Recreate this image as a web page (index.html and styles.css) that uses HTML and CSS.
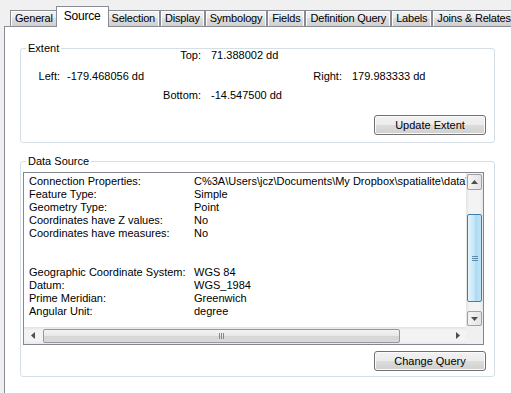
FILE: index.html
```html
<!DOCTYPE html>
<html lang="en">
<head>
    <meta charset="UTF-8">
    <title>Layer Properties - Source</title>
    <link rel="stylesheet" href="styles.css">
</head>
<body>
    <div class="tabstrip">
        <div class="tab">General</div>
        <div class="tab active">Source</div>
        <div class="tab">Selection</div>
        <div class="tab">Display</div>
        <div class="tab">Symbology</div>
        <div class="tab">Fields</div>
        <div class="tab">Definition Query</div>
        <div class="tab">Labels</div>
        <div class="tab">Joins &amp; Relates</div>
    </div>

    <div class="page">
        <div class="group extent">
            <div class="group-title">Extent</div>
            <div class="ext-row">
                <span class="ext-lbl wide">Top:</span>
                <span class="ext-val">71.388002 dd</span>
            </div>
            <div class="ext-row second">
                <span class="ext-lbl narrow">Left:</span>
                <span class="ext-val left-val">-179.468056 dd</span>
                <span class="ext-lbl right-lbl">Right:</span>
                <span class="ext-val">179.983333 dd</span>
            </div>
            <div class="ext-row third">
                <span class="ext-lbl wide">Bottom:</span>
                <span class="ext-val">-14.547500 dd</span>
            </div>
            <div class="btn-row first-btn">
                <button class="btn">Update Extent</button>
            </div>
        </div>

        <div class="group source">
            <div class="group-title">Data Source</div>
            <div class="listbox">
                <div class="list-main">
                    <div class="list-text">
                        <div class="prop"><span class="prop-name">Connection Properties:</span><span class="prop-val">C%3A\Users\jcz\Documents\My Dropbox\spatialite\data\test.sqlite</span></div>
                        <div class="prop"><span class="prop-name">Feature Type:</span><span class="prop-val">Simple</span></div>
                        <div class="prop"><span class="prop-name">Geometry Type:</span><span class="prop-val">Point</span></div>
                        <div class="prop"><span class="prop-name">Coordinates have Z values:</span><span class="prop-val">No</span></div>
                        <div class="prop"><span class="prop-name">Coordinates have measures:</span><span class="prop-val">No</span></div>
                        <div class="spacer"></div>
                        <div class="prop"><span class="prop-name">Geographic Coordinate System:</span><span class="prop-val">WGS 84</span></div>
                        <div class="prop"><span class="prop-name">Datum:</span><span class="prop-val">WGS_1984</span></div>
                        <div class="prop"><span class="prop-name">Prime Meridian:</span><span class="prop-val">Greenwich</span></div>
                        <div class="prop"><span class="prop-name">Angular Unit:</span><span class="prop-val">degree</span></div>
                    </div>
                    <div class="vscroll">
                        <div class="sb-btn">
                            <svg width="7" height="4" viewBox="0 0 7 4"><polygon points="0,4 3.5,0 7,4" fill="#4d4d4d"/></svg>
                        </div>
                        <div class="vthumb">
                            <svg width="6" height="5" viewBox="0 0 6 5"><path d="M0 0.5H6M0 2.5H6M0 4.5H6" stroke="#5f8cad" stroke-width="1"/></svg>
                        </div>
                        <div class="sb-btn down">
                            <svg width="7" height="4" viewBox="0 0 7 4"><polygon points="0,0 3.5,4 7,0" fill="#4d4d4d"/></svg>
                        </div>
                    </div>
                </div>
                <div class="hscroll-row">
                    <div class="hscroll">
                        <div class="sb-arrow">
                            <svg width="4" height="7" viewBox="0 0 4 7"><polygon points="4,0 0,3.5 4,7" fill="#4d4d4d"/></svg>
                        </div>
                        <div class="hthumb">
                            <svg width="5" height="6" viewBox="0 0 5 6"><path d="M0.5 0V6M2.5 0V6M4.5 0V6" stroke="#8a8a8a" stroke-width="1"/></svg>
                        </div>
                        <div class="sb-arrow end">
                            <svg width="4" height="7" viewBox="0 0 4 7"><polygon points="0,0 4,3.5 0,7" fill="#4d4d4d"/></svg>
                        </div>
                    </div>
                    <div class="corner"></div>
                </div>
            </div>
            <div class="btn-row">
                <button class="btn">Change Query</button>
            </div>
        </div>
    </div>
</body>
</html>
```

FILE: styles.css
```css
body {
    margin: 0;
    background-color: #f0f0f0;
    font-family: "Liberation Sans", Arial, sans-serif;
    font-size: 11px;
    color: #000;
    overflow: hidden;
}

.tabstrip {
    display: flex;
    align-items: flex-end;
    height: 26px;
    padding-left: 10px;
    white-space: nowrap;
}

.tab {
    height: 15px;
    line-height: 15px;
    padding: 0 4px;
    letter-spacing: -0.2px;
    border: 1px solid #898c95;
    border-bottom: none;
    background: linear-gradient(#f2f2f2 0%, #ebebeb 50%, #dddddd 50%, #cfcfcf 100%);
    box-shadow: inset 1px 1px 0 #fcfcfc, inset -1px 0 0 #fcfcfc;
}

.tab.active {
    position: relative;
    z-index: 1;
    height: 20px;
    line-height: 19px;
    margin: 0 -2px -1px -2px;
    padding: 0 7px;
    font-size: 12px;
    background: #fff;
    box-shadow: none;
}

.page {
    width: 520px;
    height: 380px;
    margin-left: 4px;
    background-color: #fff;
    border: 1px solid #898c95;
}

.group {
    position: relative;
    width: 475px;
    box-sizing: border-box;
    margin-left: 15px;
    border: 1px solid #d5dfe5;
    border-radius: 3px;
}

.extent {
    margin-top: 21px;
    padding-bottom: 7px;
}

.source {
    margin-top: 18px;
    padding-top: 10px;
    padding-bottom: 5px;
}

.group-title {
    position: absolute;
    top: -7px;
    left: 5px;
    padding: 0 2px;
    line-height: 13px;
    background-color: #fff;
}

.ext-row {
    display: flex;
    height: 13px;
    line-height: 13px;
    white-space: nowrap;
}

.ext-row.second {
    margin-top: 8px;
}

.ext-row.third {
    margin-top: 6px;
}

.ext-lbl {
    text-align: right;
}

.ext-lbl.wide {
    width: 180px;
}

.ext-lbl.narrow {
    width: 39px;
}

.ext-lbl.right-lbl {
    width: 75px;
}

.ext-val {
    margin-left: 10px;
}

.ext-val.left-val {
    width: 200px;
    margin-left: 7px;
}

.btn-row {
    display: flex;
    justify-content: flex-end;
    padding-right: 8px;
    margin-top: 6px;
}

.btn-row.first-btn {
    margin-top: 13px;
}

.btn {
    width: 112px;
    height: 20px;
    padding: 0;
    font-family: inherit;
    font-size: 11px;
    color: #000;
    border: 1px solid #707070;
    border-radius: 3px;
    background: linear-gradient(#f2f2f2 0%, #ebebeb 50%, #dddddd 50%, #cfcfcf 100%);
    box-shadow: inset 0 0 0 1px #fbfbfb;
}

.listbox {
    width: 461px;
    height: 173px;
    box-sizing: border-box;
    margin-left: 2px;
    border: 1px solid #828790;
    background-color: #fff;
}

.list-main {
    display: flex;
    height: 154px;
}

.list-text {
    width: 442px;
    padding: 2px 0 0 5px;
    box-sizing: border-box;
    overflow: hidden;
    white-space: nowrap;
}

.prop {
    display: flex;
    height: 13px;
    line-height: 13px;
}

.prop-name {
    flex: none;
    width: 165px;
}

.spacer {
    height: 26px;
}

.vscroll {
    display: flex;
    flex-direction: column;
    align-items: center;
    width: 17px;
    padding-top: 1px;
    box-sizing: border-box;
    background: linear-gradient(to right, #e3e3e3, #f3f3f3 20%, #f3f3f3 80%, #e9e9e9);
}

.sb-btn {
    display: flex;
    align-items: center;
    justify-content: center;
    width: 15px;
    height: 16px;
    box-sizing: border-box;
    border: 1px solid #a0a0a0;
    border-radius: 2px;
    background: linear-gradient(to right, #f4f4f4, #e4e4e4);
}

.sb-btn.down {
    height: 15px;
    margin-top: 9px;
}

.vthumb {
    display: flex;
    align-items: center;
    justify-content: center;
    width: 15px;
    height: 88px;
    margin-top: 24px;
    box-sizing: border-box;
    border: 1px solid #3c7fb1;
    border-radius: 2px;
    background: linear-gradient(to right, #e3f4fc, #c4e6f8 50%, #a9d9f3 51%, #bfe4f8);
}

.hscroll-row {
    display: flex;
    height: 17px;
}

.hscroll {
    display: flex;
    align-items: center;
    width: 442px;
    background: linear-gradient(#e3e3e3, #f3f3f3 20%, #f3f3f3 80%, #e9e9e9);
}

.sb-arrow {
    display: flex;
    align-items: center;
    justify-content: center;
    width: 17px;
    height: 17px;
}

.sb-arrow.end {
    margin-left: auto;
}

.hthumb {
    display: flex;
    align-items: center;
    justify-content: center;
    width: 357px;
    height: 14px;
    margin-left: 2px;
    box-sizing: border-box;
    border: 1px solid #979797;
    border-radius: 2px;
    background: linear-gradient(#f3f3f3, #e8e8e8 50%, #d6d6d6 51%, #d9d9d9);
}

.corner {
    width: 17px;
    height: 17px;
    background-color: #f0f0f0;
}
```
